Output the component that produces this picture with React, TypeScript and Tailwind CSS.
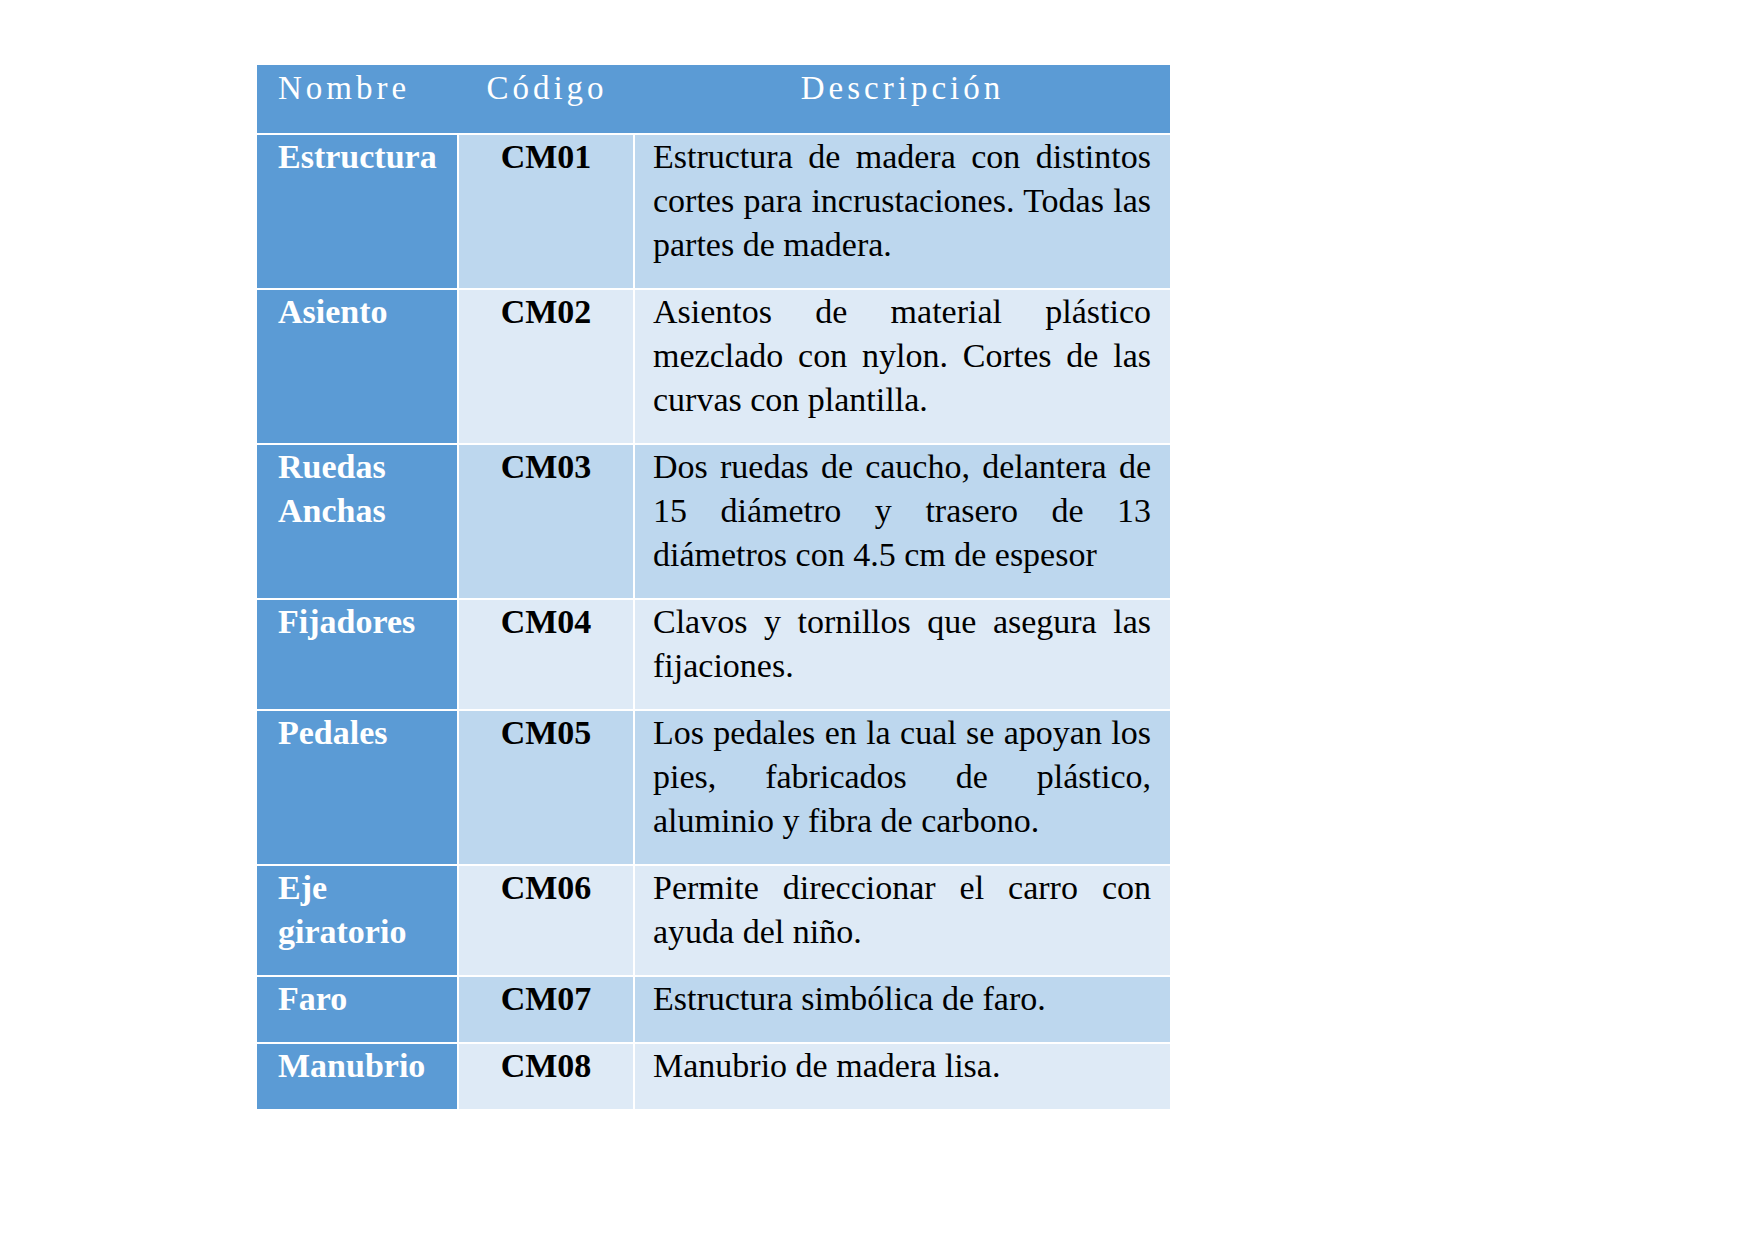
import React from "react";

interface Componente {
  nombre: string[];
  codigo: string;
  descripcion: string[];
}

const componentes: Componente[] = [
  {
    nombre: ["Estructura"],
    codigo: "CM01",
    descripcion: [
      "Estructura de madera con distintos",
      "cortes para incrustaciones. Todas las",
      "partes de madera.",
    ],
  },
  {
    nombre: ["Asiento"],
    codigo: "CM02",
    descripcion: [
      "Asientos de material plástico",
      "mezclado con nylon. Cortes de las",
      "curvas con plantilla.",
    ],
  },
  {
    nombre: ["Ruedas", "Anchas"],
    codigo: "CM03",
    descripcion: [
      "Dos ruedas de caucho, delantera de",
      "15 diámetro y trasero de 13",
      "diámetros con 4.5 cm de espesor",
    ],
  },
  {
    nombre: ["Fijadores"],
    codigo: "CM04",
    descripcion: ["Clavos y tornillos que asegura las", "fijaciones."],
  },
  {
    nombre: ["Pedales"],
    codigo: "CM05",
    descripcion: [
      "Los pedales en la cual se apoyan los",
      "pies, fabricados de plástico,",
      "aluminio y fibra de carbono.",
    ],
  },
  {
    nombre: ["Eje", "giratorio"],
    codigo: "CM06",
    descripcion: ["Permite direccionar el carro con", "ayuda del niño."],
  },
  {
    nombre: ["Faro"],
    codigo: "CM07",
    descripcion: ["Estructura simbólica de faro."],
  },
  {
    nombre: ["Manubrio"],
    codigo: "CM08",
    descripcion: ["Manubrio de madera lisa."],
  },
];

// each description line is its own block so the wrapping follows the document
const Lineas = ({ lineas }: { lineas: string[] }) => (
  <>
    {lineas.map((linea, i) => (
      <div
        key={i}
        className={
          i < lineas.length - 1
            ? "whitespace-nowrap text-justify [text-align-last:justify]"
            : "whitespace-nowrap text-left"
        }
      >
        {linea}
      </div>
    ))}
  </>
);

export default function App() {
  return (
    <div className="min-h-screen bg-white pl-[257px] pt-[65px] font-['Liberation_Serif','Times_New_Roman',serif] text-[34px] leading-[44px]">
      <div className="w-[913px]">
        <div className="flex h-[68px] bg-[#5B9BD5] pt-px text-[33px] font-normal tracking-[4px] text-white">
          <div className="w-[202px] pl-[21px]">Nombre</div>
          <div className="w-[176px] text-center">Código</div>
          <div className="w-[535px] text-center">Descripción</div>
        </div>
        <div className="mt-[2px] grid grid-cols-[200px_174px_535px] gap-[2px]">
          {componentes.map((c, idx) => {
            const fondo = idx % 2 === 0 ? "bg-[#BDD7EE]" : "bg-[#DEEAF6]";
            return (
              <React.Fragment key={c.codigo}>
                <div className="bg-[#5B9BD5] pb-[21px] pl-[21px] pr-[8px] font-bold text-white">
                  {c.nombre.map((n) => (
                    <div key={n} className="whitespace-nowrap">{n}</div>
                  ))}
                </div>
                <div className={`${fondo} pb-[21px] text-center font-bold text-black`}>
                  {c.codigo}
                </div>
                <div className={`${fondo} pb-[21px] pl-[18px] pr-[19px] text-black`}>
                  <Lineas lineas={c.descripcion} />
                </div>
              </React.Fragment>
            );
          })}
        </div>
      </div>
    </div>
  );
}
